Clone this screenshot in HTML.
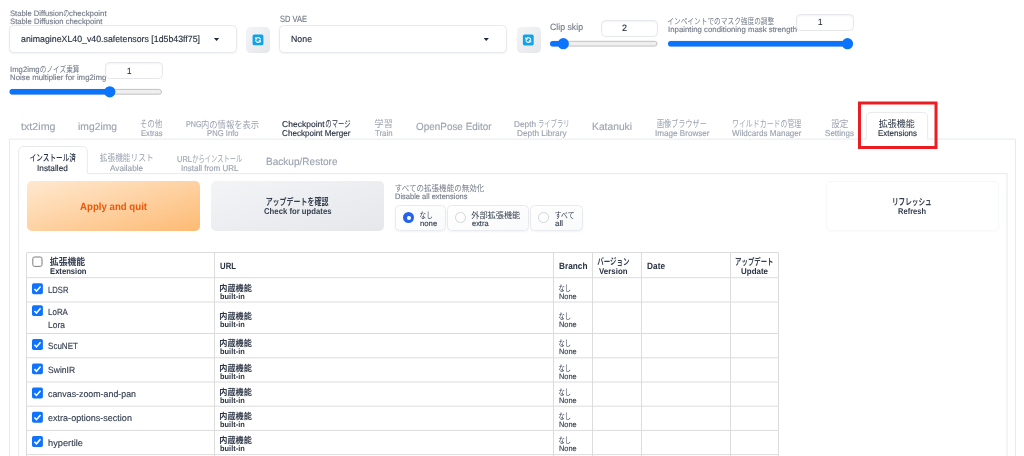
<!DOCTYPE html>
<html lang="ja"><head><meta charset="utf-8"><title>Stable Diffusion</title>
<style>
html,body{margin:0;padding:0;background:#fff}
html{width:1024px;height:456px;overflow:hidden}
body{width:1024px;height:456px;position:relative;overflow:hidden;font-family:"Liberation Sans",sans-serif}
#page{position:absolute;left:0;top:0;width:1024px;height:456px;overflow:hidden}
#soft{position:absolute;left:0;top:0;width:1024px;height:500px;filter:blur(.35px)}
.abs,.j,.t,.box,.rbtn,.num,.trk,.fill,.thumb,.panel,.seltab,.red,.apply,.gbtn,.wbtn,.rad,.rc,.tbl,.hl,.vl,.cb{position:absolute;box-sizing:border-box}
.j{overflow:visible;display:block}
.j text{font-family:"Liberation Sans","Noto Sans CJK JP",sans-serif}
.t{white-space:pre;line-height:12px;-webkit-text-stroke:.15px;transform-origin:0 0;margin:0}
.box{border:1px solid #e7e9ed;border-radius:4.5px;background:#fff;box-shadow:0 1px 2px rgba(0,0,0,.05)}
.rbtn{border-radius:4.5px;background:linear-gradient(to bottom right,#f3f4f6,#e5e7eb)}
.num{border:1px solid #e5e7eb;border-radius:4.5px;background:#fff;box-shadow:inset 0 1px 2px rgba(0,0,0,.05)}
.trk{height:6px;border-radius:3px;background:#efefef;border:1px solid #b9b9b9}
.fill{height:6px;border-radius:3px;background:#0a74ff}
.thumb{width:11px;height:11px;border-radius:50%;background:#0a74ff}
.panel{border:1px solid #e5e7eb;background:#fff}
.seltab{border:1px solid #e5e7eb;border-bottom:1px solid #fff;border-radius:5px 5px 0 0;background:#fff}
.red{border:3px solid #ec1c24}
.apply{border-radius:5px;background:linear-gradient(to bottom right,#ffe9d0,#fdba74)}
.gbtn{border-radius:5px;background:linear-gradient(to bottom right,#f3f4f6,#e5e7eb)}
.wbtn{border-radius:5px;background:#fff;border:1px solid #f7f8f9;box-shadow:0 1px 2px rgba(0,0,0,.025)}
.rad{border:1px solid #e8eaee;border-radius:4.5px;background:linear-gradient(to bottom right,#fff,#f9fafb);box-shadow:0 1px 2px rgba(0,0,0,.05)}
.rc{width:11px;height:11px;border-radius:50%;border:1px solid #d1d5db;background:#fff}
.rc.on{border:none;background:#2563eb}
.rc.on:after{content:"";position:absolute;left:3.6px;top:3.6px;width:3.8px;height:3.8px;border-radius:50%;background:#fff}
.tbl{border:1px solid #dedede;background:#fff}
.hl{height:1px;background:#dedede}
.vl{width:1px;background:#dedede}
.cb{width:11px;height:11px;border:1px solid #9ca3af;border-radius:2px;background:#fff}
</style></head>
<body>
<div id="page"><div id="soft">
<div class="box" style="left:9px;top:25px;width:228px;height:28px"></div>
<span class="t" style="left:9.60px;top:8px;font-size:7.8px;color:#747b88;transform:skewX(.2deg) scaleX(0.9767)">Stable Diffusion</span>
<svg class="j" role="img" aria-label="の" style="left:62px;top:8px;fill:#747b88" width="8" height="12"><text x="1.23" y="8.39" font-size="8.4" textLength="6.0" lengthAdjust="spacingAndGlyphs">の</text></svg>
<span class="t" style="left:69.40px;top:8px;font-size:7.8px;color:#747b88;transform:skewX(.2deg) scaleX(1.0085)">checkpoint</span>
<span class="t" style="left:9.60px;top:16px;font-size:7.8px;color:#747b88;transform:skewX(.2deg) scaleX(0.9838)">Stable Diffusion checkpoint</span>
<span class="t" style="left:20.50px;top:33px;font-size:9.1px;color:#283241;transform:skewX(.2deg) scaleX(0.9655)">animagineXL40_v40.safetensors [1d5b43ff75]</span>
<svg class="abs" style="left:212px;top:37px" width="9" height="5"><g transform="translate(1.90 1.00) scale(0.5300 0.5000)"><path d="M0 0h10L5 6z" fill="#1f2937"/></g></svg>
<div class="rbtn" style="left:246px;top:27px;width:24px;height:26px"></div>
<svg class="abs" style="left:251px;top:33px" width="14" height="14"><g transform="translate(1.60 1.50) scale(0.4909 0.4909)"><rect width="22" height="22" rx="3.2" fill="#12a2e8"/><g transform="translate(22 0) scale(-1 1)" fill="#fff"><path d="M4.9 10.4a6.1 6.1 0 0 1 10.3-3.7l1.7-1.7v5.4h-5.4l1.9-1.9a3.5 3.5 0 0 0-6 1.9z"/><path d="M17.1 11.6a6.1 6.1 0 0 1-10.3 3.7l-1.7 1.7v-5.4h5.4l-1.9 1.9a3.5 3.5 0 0 0 6-1.9z"/></g></g></svg>
<span class="t" style="left:280.00px;top:13px;font-size:9.1px;color:#747b88;transform:skewX(.2deg) scaleX(0.8260)">SD VAE</span>
<div class="box" style="left:279px;top:25px;width:228px;height:28px"></div>
<span class="t" style="left:291.00px;top:33px;font-size:9.1px;color:#283241;transform:skewX(.2deg) scaleX(0.9655)">None</span>
<svg class="abs" style="left:482px;top:37px" width="8" height="5"><g transform="translate(1.60 1.00) scale(0.5300 0.5000)"><path d="M0 0h10L5 6z" fill="#1f2937"/></g></svg>
<div class="rbtn" style="left:516.5px;top:27px;width:24px;height:26px"></div>
<svg class="abs" style="left:521px;top:33px" width="14" height="14"><g transform="translate(1.90 1.60) scale(0.4909 0.4909)"><rect width="22" height="22" rx="3.2" fill="#12a2e8"/><g transform="translate(22 0) scale(-1 1)" fill="#fff"><path d="M4.9 10.4a6.1 6.1 0 0 1 10.3-3.7l1.7-1.7v5.4h-5.4l1.9-1.9a3.5 3.5 0 0 0-6 1.9z"/><path d="M17.1 11.6a6.1 6.1 0 0 1-10.3 3.7l-1.7 1.7v-5.4h5.4l-1.9 1.9a3.5 3.5 0 0 0 6-1.9z"/></g></g></svg>
<span class="t" style="left:550.00px;top:21px;font-size:9.1px;color:#747b88;transform:skewX(.2deg) scaleX(0.9600)">Clip skip</span>
<div class="num" style="left:601px;top:20px;width:57px;height:17px"></div>
<span class="t" style="left:621.80px;top:22px;font-size:9.1px;color:#283241;transform:skewX(.2deg) scaleX(0.9877)">2</span>
<svg class="abs" style="left:548px;top:36px" width="118" height="15"><rect x="2.50" y="5.30" width="106.50" height="4.8" rx="2.4" fill="#efefef" stroke="#b4b4b4" stroke-width="0.8"/><rect x="2.00" y="4.90" width="13.30" height="5.6" rx="2.8" fill="#0a74ff"/><circle cx="15.30" cy="7.70" r="5.6" fill="#0a74ff"/></svg>
<svg class="j" role="img" aria-label="インペイントでのマスク強度の調整" style="left:666px;top:15px;fill:#747b88" width="109" height="13"><text x="1.34" y="9.19" font-size="8.4" textLength="106.9" lengthAdjust="spacingAndGlyphs">インペイントでのマスク強度の調整</text></svg>
<span class="t" style="left:667.50px;top:24px;font-size:7.8px;color:#747b88;transform:skewX(.2deg) scaleX(1.0021)">Inpainting conditioning mask strength</span>
<div class="num" style="left:796px;top:14px;width:58px;height:17px"></div>
<span class="t" style="left:818.00px;top:16px;font-size:9.1px;color:#283241;transform:skewX(.2deg) scaleX(0.8889)">1</span>
<svg class="abs" style="left:666px;top:36px" width="195" height="15"><rect x="2.50" y="5.30" width="184.00" height="4.8" rx="2.4" fill="#efefef" stroke="#b4b4b4" stroke-width="0.8"/><rect x="2.00" y="4.90" width="179.50" height="5.6" rx="2.8" fill="#0a74ff"/><circle cx="181.50" cy="7.70" r="5.6" fill="#0a74ff"/></svg>
<span class="t" style="left:9.60px;top:64px;font-size:7.8px;color:#747b88;transform:skewX(.2deg) scaleX(0.9898)">Img2img</span>
<svg class="j" role="img" aria-label="のノイズ乗算" style="left:38px;top:64px;fill:#747b88" width="43" height="12"><text x="1.73" y="8.39" font-size="8.4" textLength="39.8" lengthAdjust="spacingAndGlyphs">のノイズ乗算</text></svg>
<span class="t" style="left:9.60px;top:72px;font-size:7.8px;color:#747b88;transform:skewX(.2deg) scaleX(1.0020)">Noise multiplier for img2img</span>
<div class="num" style="left:105px;top:62px;width:58px;height:17px"></div>
<span class="t" style="left:127.00px;top:65px;font-size:9.1px;color:#283241;transform:skewX(.2deg) scaleX(0.8889)">1</span>
<svg class="abs" style="left:7px;top:84px" width="163" height="15"><rect x="3.00" y="5.40" width="151.50" height="4.8" rx="2.4" fill="#efefef" stroke="#b4b4b4" stroke-width="0.8"/><rect x="2.50" y="5.00" width="100.30" height="5.6" rx="2.8" fill="#0a74ff"/><circle cx="102.80" cy="7.80" r="5.6" fill="#0a74ff"/></svg>
<svg class="abs" style="left:0;top:0" width="1024" height="500"><path d="M9.5 500V139.1H866.3V116.9a4.5 4.5 0 0 1 4.5 -4.5H923.1a4.5 4.5 0 0 1 4.5 4.5V139.1H1015.5V500 M18.6 500V151.0a4.5 4.5 0 0 1 4.5 -4.5H82.8a4.5 4.5 0 0 1 4.5 4.5V173.6H1007V500" fill="none" stroke="#e7e9ed" stroke-width="1"/><path d="M26.5 252.5H778.5 M26.5 277.7H778.5 M26.5 302H778.5 M26.5 333.5H778.5 M26.5 357.8H778.5 M26.5 382H778.5 M26.5 406.2H778.5 M26.5 430.4H778.5 M26.5 454.6H778.5 M26.5 478.8H778.5 M26.5 252.5V500 M214.5 252.5V500 M553.5 252.5V500 M592.5 252.5V500 M641.5 252.5V500 M730.5 252.5V500 M778.5 252.5V500" fill="none" stroke="#dcdcdc" stroke-width="1"/></svg>
<span class="t" style="left:20.50px;top:121px;font-size:10.4px;color:#9ca3af;transform:skewX(.2deg) scaleX(1.0299)">txt2img</span>
<span class="t" style="left:78.00px;top:121px;font-size:10.4px;color:#9ca3af;transform:skewX(.2deg) scaleX(0.9932)">img2img</span>
<svg class="j" role="img" aria-label="その他" style="left:139px;top:118px;fill:#9ca3af" width="24" height="13"><text x="0.70" y="9.36" font-size="9.1" textLength="22.7" lengthAdjust="spacingAndGlyphs">その他</text></svg>
<span class="t" style="left:140.50px;top:127px;font-size:8.45px;color:#9ca3af;transform:skewX(.2deg) scaleX(0.8988)">Extras</span>
<span class="t" style="left:185.60px;top:118px;font-size:8.45px;color:#9ca3af;transform:skewX(.2deg) scaleX(0.8417)">PNG</span>
<svg class="j" role="img" aria-label="内の情報を表示" style="left:200px;top:118px;fill:#9ca3af" width="60" height="13"><text x="1.00" y="9.66" font-size="9.1" textLength="58.1" lengthAdjust="spacingAndGlyphs">内の情報を表示</text></svg>
<span class="t" style="left:206.50px;top:127px;font-size:8.45px;color:#9ca3af;transform:skewX(.2deg) scaleX(0.9077)">PNG Info</span>
<span class="t" style="left:282.20px;top:118px;font-size:8.45px;color:#283241;transform:skewX(.2deg) scaleX(1.0090)">Checkpoint</span>
<svg class="j" role="img" aria-label="のマージ" style="left:324px;top:118px;fill:#283241" width="28" height="13"><text x="1.32" y="9.36" font-size="9.1" textLength="25.3" lengthAdjust="spacingAndGlyphs">のマージ</text></svg>
<span class="t" style="left:282.20px;top:127px;font-size:8.45px;color:#283241;transform:skewX(.2deg) scaleX(0.9608)">Checkpoint Merger</span>
<svg class="j" role="img" aria-label="学習" style="left:374px;top:118px;fill:#9ca3af" width="19" height="13"><text x="0.45" y="9.36" font-size="9.1" textLength="18.4" lengthAdjust="spacingAndGlyphs">学習</text></svg>
<span class="t" style="left:374.50px;top:127px;font-size:8.45px;color:#9ca3af;transform:skewX(.2deg) scaleX(0.9249)">Train</span>
<span class="t" style="left:415.50px;top:121px;font-size:10.4px;color:#9ca3af;transform:skewX(.2deg) scaleX(0.9540)">OpenPose Editor</span>
<span class="t" style="left:514.00px;top:118px;font-size:8.45px;color:#9ca3af;transform:skewX(.2deg) scaleX(0.9771)">Depth</span>
<svg class="j" role="img" aria-label="ライブラリ" style="left:537px;top:118px;fill:#9ca3af" width="33" height="13"><text x="0.93" y="9.36" font-size="9.1" textLength="31.7" lengthAdjust="spacingAndGlyphs">ライブラリ</text></svg>
<span class="t" style="left:516.50px;top:127px;font-size:8.45px;color:#9ca3af;transform:skewX(.2deg) scaleX(0.9772)">Depth Library</span>
<span class="t" style="left:592.00px;top:121px;font-size:10.4px;color:#9ca3af;transform:skewX(.2deg) scaleX(0.9892)">Katanuki</span>
<svg class="j" role="img" aria-label="画像ブラウザー" style="left:656px;top:118px;fill:#9ca3af" width="52" height="13"><text x="0.98" y="9.36" font-size="9.1" textLength="49.8" lengthAdjust="spacingAndGlyphs">画像ブラウザー</text></svg>
<span class="t" style="left:654.50px;top:127px;font-size:8.45px;color:#9ca3af;transform:skewX(.2deg) scaleX(0.9604)">Image Browser</span>
<svg class="j" role="img" aria-label="ワイルドカードの管理" style="left:731px;top:118px;fill:#9ca3af" width="71" height="13"><text x="0.99" y="9.36" font-size="9.1" textLength="69.3" lengthAdjust="spacingAndGlyphs">ワイルドカードの管理</text></svg>
<span class="t" style="left:732.00px;top:127px;font-size:8.45px;color:#9ca3af;transform:skewX(.2deg) scaleX(0.9561)">Wildcards Manager</span>
<svg class="j" role="img" aria-label="設定" style="left:830px;top:118px;fill:#9ca3af" width="19" height="13"><text x="1.17" y="9.36" font-size="9.1" textLength="17.2" lengthAdjust="spacingAndGlyphs">設定</text></svg>
<span class="t" style="left:825.00px;top:127px;font-size:8.45px;color:#9ca3af;transform:skewX(.2deg) scaleX(0.9508)">Settings</span>
<svg class="j" role="img" aria-label="拡張機能" style="left:878px;top:118px;fill:#283241" width="38" height="13"><text x="0.76" y="9.36" font-size="9.1" textLength="36.0" lengthAdjust="spacingAndGlyphs">拡張機能</text></svg>
<span class="t" style="left:877.50px;top:127px;font-size:8.45px;color:#283241;transform:skewX(.2deg) scaleX(0.9447)">Extensions</span>
<svg class="abs" style="left:855px;top:98px" width="86" height="54"><rect x="4.5" y="5" width="76.5" height="44.5" fill="none" stroke="#ec1c24" stroke-width="3"/></svg>
<svg class="j" role="img" aria-label="インストール済" style="left:28px;top:152px;fill:#283241" width="49" height="13"><text x="1.70" y="9.46" font-size="9.1" font-weight="500" textLength="46.2" lengthAdjust="spacingAndGlyphs">インストール済</text></svg>
<span class="t" style="left:37.40px;top:162px;font-size:8.45px;color:#283241;transform:skewX(.2deg) scaleX(0.9797)">Installed</span>
<svg class="j" role="img" aria-label="拡張機能リスト" style="left:99px;top:152px;fill:#9ca3af" width="55" height="13"><text x="0.76" y="9.46" font-size="9.1" textLength="53.9" lengthAdjust="spacingAndGlyphs">拡張機能リスト</text></svg>
<span class="t" style="left:110.00px;top:162px;font-size:8.45px;color:#9ca3af;transform:skewX(.2deg) scaleX(0.9679)">Available</span>
<span class="t" style="left:176.50px;top:153px;font-size:8.45px;color:#9ca3af;transform:skewX(.2deg) scaleX(0.8881)">URL</span>
<svg class="j" role="img" aria-label="からインストール" style="left:191px;top:152px;fill:#9ca3af" width="53" height="13"><text x="1.19" y="9.66" font-size="9.1" textLength="50.1" lengthAdjust="spacingAndGlyphs">からインストール</text></svg>
<span class="t" style="left:180.50px;top:162px;font-size:8.45px;color:#9ca3af;transform:skewX(.2deg) scaleX(0.9507)">Install from URL</span>
<span class="t" style="left:266.00px;top:156px;font-size:10.4px;color:#9ca3af;transform:skewX(.2deg) scaleX(0.9670)">Backup/Restore</span>
<div class="apply" style="left:26.5px;top:180.5px;width:173.5px;height:50.5px"></div>
<span class="t" style="left:79.50px;top:201px;font-size:10.4px;color:#ea580c;font-weight:700;-webkit-text-stroke:0;transform:skewX(.2deg) scaleX(0.9285)">Apply and quit</span>
<div class="gbtn" style="left:210.5px;top:180.5px;width:173.5px;height:50.5px"></div>
<svg class="j" role="img" aria-label="アップデートを確認" style="left:265px;top:195px;fill:#364050" width="65" height="13"><text x="0.63" y="9.76" font-size="9.1" font-weight="700" textLength="63.0" lengthAdjust="spacingAndGlyphs">アップデートを確認</text></svg>
<span class="t" style="left:263.50px;top:205px;font-size:8.45px;color:#364050;font-weight:700;-webkit-text-stroke:0;transform:skewX(.2deg) scaleX(0.9168)">Check for updates</span>
<svg class="j" role="img" aria-label="すべての拡張機能の無効化" style="left:394px;top:182px;fill:#747b88" width="91" height="12"><text x="0.77" y="8.89" font-size="8.4" textLength="89.5" lengthAdjust="spacingAndGlyphs">すべての拡張機能の無効化</text></svg>
<span class="t" style="left:395.00px;top:191px;font-size:7.8px;color:#747b88;transform:skewX(.2deg) scaleX(0.9613)">Disable all extensions</span>
<div class="rad" style="left:395px;top:205px;width:50.5px;height:26px"></div><div class="rc on" style="left:403.2px;top:212.3px"></div>
<svg class="j" role="img" aria-label="なし" style="left:418px;top:209px;fill:#374151" width="16" height="12"><text x="1.56" y="8.59" font-size="8.4" textLength="13.2" lengthAdjust="spacingAndGlyphs">なし</text></svg>
<span class="t" style="left:419.80px;top:218px;font-size:7.8px;color:#374151;transform:skewX(.2deg) scaleX(0.9908)">none</span>
<div class="rad" style="left:447px;top:205px;width:82px;height:26px"></div><div class="rc" style="left:455.1px;top:212.3px"></div>
<svg class="j" role="img" aria-label="外部拡張機能" style="left:470px;top:209px;fill:#374151" width="51" height="12"><text x="1.29" y="8.59" font-size="8.4" textLength="49.0" lengthAdjust="spacingAndGlyphs">外部拡張機能</text></svg>
<span class="t" style="left:471.50px;top:218px;font-size:7.8px;color:#374151;transform:skewX(.2deg) scaleX(0.9514)">extra</span>
<div class="rad" style="left:530px;top:205px;width:52.5px;height:26px"></div><div class="rc" style="left:538.0px;top:212.3px"></div>
<svg class="j" role="img" aria-label="すべて" style="left:554px;top:209px;fill:#374151" width="21" height="12"><text x="0.75" y="8.59" font-size="8.4" textLength="19.7" lengthAdjust="spacingAndGlyphs">すべて</text></svg>
<span class="t" style="left:555.00px;top:218px;font-size:7.8px;color:#374151;transform:skewX(.2deg) scaleX(1.0240)">all</span>
<div class="wbtn" style="left:825.5px;top:180.5px;width:173px;height:50.5px"></div>
<svg class="j" role="img" aria-label="リフレッシュ" style="left:892px;top:195px;fill:#364050" width="40" height="13"><text x="0" y="9.76" font-size="9.1" font-weight="700" textLength="39.6" lengthAdjust="spacingAndGlyphs">リフレッシュ</text></svg>
<span class="t" style="left:898.00px;top:205px;font-size:8.45px;color:#364050;font-weight:700;-webkit-text-stroke:0;transform:skewX(.2deg) scaleX(0.8911)">Refresh</span>
<svg class="abs" style="left:31px;top:255px" width="13" height="13"><g transform="translate(1.30 1.50) scale(1.0000 1.0000)"><rect x="0.5" y="0.5" width="9.2" height="9.4" rx="1.8" fill="#fff" stroke="#7c7c7c" stroke-width="1"/></g></svg>
<svg class="j" role="img" aria-label="拡張機能" style="left:49px;top:256px;fill:#364050" width="37" height="13"><text x="0.81" y="9.46" font-size="9.1" font-weight="700" textLength="35.4" lengthAdjust="spacingAndGlyphs">拡張機能</text></svg>
<span class="t" style="left:49.50px;top:265px;font-size:8.45px;color:#283241;font-weight:700;-webkit-text-stroke:0;transform:skewX(.2deg) scaleX(0.9051)">Extension</span>
<span class="t" style="left:220.00px;top:260px;font-size:9.1px;color:#283241;font-weight:700;-webkit-text-stroke:0;transform:skewX(.2deg) scaleX(0.8555)">URL</span>
<span class="t" style="left:558.50px;top:260px;font-size:9.1px;color:#283241;font-weight:700;-webkit-text-stroke:0;transform:skewX(.2deg) scaleX(0.9093)">Branch</span>
<svg class="j" role="img" aria-label="バージョン" style="left:596px;top:256px;fill:#364050" width="35" height="13"><text x="1.20" y="9.26" font-size="9.1" font-weight="700" textLength="32.3" lengthAdjust="spacingAndGlyphs">バージョン</text></svg>
<span class="t" style="left:599.00px;top:265px;font-size:8.45px;color:#283241;font-weight:700;-webkit-text-stroke:0;transform:skewX(.2deg) scaleX(0.9349)">Version</span>
<span class="t" style="left:647.00px;top:260px;font-size:9.1px;color:#283241;font-weight:700;-webkit-text-stroke:0;transform:skewX(.2deg) scaleX(0.9128)">Date</span>
<svg class="j" role="img" aria-label="アップデート" style="left:734px;top:256px;fill:#364050" width="40" height="13"><text x="1.12" y="9.26" font-size="9.1" font-weight="700" textLength="38.4" lengthAdjust="spacingAndGlyphs">アップデート</text></svg>
<span class="t" style="left:741.00px;top:265px;font-size:8.45px;color:#283241;font-weight:700;-webkit-text-stroke:0;transform:skewX(.2deg) scaleX(0.9437)">Update</span>
<svg class="abs" style="left:31px;top:282px" width="13" height="14"><g transform="translate(1.00 1.30) scale(0.6813 0.6813)"><rect width="16" height="16" rx="2.6" fill="#0f73fd"/><path d="M3.6 8.4l3 3.1 5.9-6.9" fill="none" stroke="#fff" stroke-width="2.3" stroke-linecap="butt" stroke-linejoin="miter"/></g></svg>
<span class="t" style="left:47.60px;top:284px;font-size:9.1px;color:#374151;transform:skewX(.2deg) scaleX(0.8407)">LDSR</span>
<svg class="j" role="img" aria-label="内蔵機能" style="left:219px;top:282px;fill:#2e3746" width="34" height="12"><text x="0.28" y="8.68" font-size="7.7" font-weight="700" textLength="32.6" lengthAdjust="spacingAndGlyphs">内蔵機能</text></svg>
<span class="t" style="left:220.00px;top:291px;font-size:7.8px;color:#283241;font-weight:700;-webkit-text-stroke:0;transform:skewX(.2deg) scaleX(0.9544)">built-in</span>
<svg class="j" role="img" aria-label="なし" style="left:557px;top:282px;fill:#374151" width="15" height="12"><text x="1.58" y="8.61" font-size="7.8" textLength="12.5" lengthAdjust="spacingAndGlyphs">なし</text></svg>
<span class="t" style="left:558.80px;top:291px;font-size:7.8px;color:#374151;transform:skewX(.2deg) scaleX(0.9495)">None</span>
<svg class="abs" style="left:31px;top:304px" width="13" height="14"><g transform="translate(1.00 1.20) scale(0.6813 0.6813)"><rect width="16" height="16" rx="2.6" fill="#0f73fd"/><path d="M3.6 8.4l3 3.1 5.9-6.9" fill="none" stroke="#fff" stroke-width="2.3" stroke-linecap="butt" stroke-linejoin="miter"/></g></svg>
<span class="t" style="left:47.60px;top:306px;font-size:9.1px;color:#374151;transform:skewX(.2deg) scaleX(0.8747)">LoRA</span>
<span class="t" style="left:47.60px;top:319px;font-size:9.1px;color:#374151;transform:skewX(.2deg) scaleX(0.9284)">Lora</span>
<svg class="j" role="img" aria-label="内蔵機能" style="left:219px;top:310px;fill:#2e3746" width="34" height="12"><text x="0.28" y="8.58" font-size="7.7" font-weight="700" textLength="32.6" lengthAdjust="spacingAndGlyphs">内蔵機能</text></svg>
<span class="t" style="left:220.00px;top:319px;font-size:7.8px;color:#283241;font-weight:700;-webkit-text-stroke:0;transform:skewX(.2deg) scaleX(0.9544)">built-in</span>
<svg class="j" role="img" aria-label="なし" style="left:557px;top:310px;fill:#374151" width="15" height="12"><text x="1.58" y="8.51" font-size="7.8" textLength="12.5" lengthAdjust="spacingAndGlyphs">なし</text></svg>
<span class="t" style="left:558.80px;top:319px;font-size:7.8px;color:#374151;transform:skewX(.2deg) scaleX(0.9495)">None</span>
<svg class="abs" style="left:31px;top:338px" width="13" height="13"><g transform="translate(1.00 1.10) scale(0.6813 0.6813)"><rect width="16" height="16" rx="2.6" fill="#0f73fd"/><path d="M3.6 8.4l3 3.1 5.9-6.9" fill="none" stroke="#fff" stroke-width="2.3" stroke-linecap="butt" stroke-linejoin="miter"/></g></svg>
<span class="t" style="left:47.60px;top:340px;font-size:9.1px;color:#374151;transform:skewX(.2deg) scaleX(0.8831)">ScuNET</span>
<svg class="j" role="img" aria-label="内蔵機能" style="left:219px;top:338px;fill:#2e3746" width="34" height="12"><text x="0.28" y="8.48" font-size="7.7" font-weight="700" textLength="32.6" lengthAdjust="spacingAndGlyphs">内蔵機能</text></svg>
<span class="t" style="left:220.00px;top:346px;font-size:7.8px;color:#283241;font-weight:700;-webkit-text-stroke:0;transform:skewX(.2deg) scaleX(0.9544)">built-in</span>
<svg class="j" role="img" aria-label="なし" style="left:557px;top:338px;fill:#374151" width="15" height="12"><text x="1.58" y="8.41" font-size="7.8" textLength="12.5" lengthAdjust="spacingAndGlyphs">なし</text></svg>
<span class="t" style="left:558.80px;top:346px;font-size:7.8px;color:#374151;transform:skewX(.2deg) scaleX(0.9495)">None</span>
<svg class="abs" style="left:31px;top:362px" width="13" height="14"><g transform="translate(1.00 1.40) scale(0.6813 0.6813)"><rect width="16" height="16" rx="2.6" fill="#0f73fd"/><path d="M3.6 8.4l3 3.1 5.9-6.9" fill="none" stroke="#fff" stroke-width="2.3" stroke-linecap="butt" stroke-linejoin="miter"/></g></svg>
<span class="t" style="left:47.60px;top:364px;font-size:9.1px;color:#374151;transform:skewX(.2deg) scaleX(0.9406)">SwinIR</span>
<svg class="j" role="img" aria-label="内蔵機能" style="left:219px;top:362px;fill:#2e3746" width="34" height="12"><text x="0.28" y="8.73" font-size="7.7" font-weight="700" textLength="32.6" lengthAdjust="spacingAndGlyphs">内蔵機能</text></svg>
<span class="t" style="left:220.00px;top:371px;font-size:7.8px;color:#283241;font-weight:700;-webkit-text-stroke:0;transform:skewX(.2deg) scaleX(0.9544)">built-in</span>
<svg class="j" role="img" aria-label="なし" style="left:557px;top:362px;fill:#374151" width="15" height="12"><text x="1.58" y="8.66" font-size="7.8" textLength="12.5" lengthAdjust="spacingAndGlyphs">なし</text></svg>
<span class="t" style="left:558.80px;top:371px;font-size:7.8px;color:#374151;transform:skewX(.2deg) scaleX(0.9495)">None</span>
<svg class="abs" style="left:31px;top:386px" width="13" height="14"><g transform="translate(1.00 1.60) scale(0.6813 0.6813)"><rect width="16" height="16" rx="2.6" fill="#0f73fd"/><path d="M3.6 8.4l3 3.1 5.9-6.9" fill="none" stroke="#fff" stroke-width="2.3" stroke-linecap="butt" stroke-linejoin="miter"/></g></svg>
<span class="t" style="left:47.60px;top:388px;font-size:9.1px;color:#374151;transform:skewX(.2deg) scaleX(0.9725)">canvas-zoom-and-pan</span>
<svg class="j" role="img" aria-label="内蔵機能" style="left:219px;top:387px;fill:#2e3746" width="34" height="11"><text x="0.28" y="7.93" font-size="7.7" font-weight="700" textLength="32.6" lengthAdjust="spacingAndGlyphs">内蔵機能</text></svg>
<span class="t" style="left:220.00px;top:395px;font-size:7.8px;color:#283241;font-weight:700;-webkit-text-stroke:0;transform:skewX(.2deg) scaleX(0.9544)">built-in</span>
<svg class="j" role="img" aria-label="なし" style="left:557px;top:387px;fill:#374151" width="15" height="11"><text x="1.58" y="7.86" font-size="7.8" textLength="12.5" lengthAdjust="spacingAndGlyphs">なし</text></svg>
<span class="t" style="left:558.80px;top:395px;font-size:7.8px;color:#374151;transform:skewX(.2deg) scaleX(0.9495)">None</span>
<svg class="abs" style="left:31px;top:410px" width="13" height="14"><g transform="translate(1.00 1.80) scale(0.6813 0.6813)"><rect width="16" height="16" rx="2.6" fill="#0f73fd"/><path d="M3.6 8.4l3 3.1 5.9-6.9" fill="none" stroke="#fff" stroke-width="2.3" stroke-linecap="butt" stroke-linejoin="miter"/></g></svg>
<span class="t" style="left:47.60px;top:412px;font-size:9.1px;color:#374151;transform:skewX(.2deg) scaleX(0.9938)">extra-options-section</span>
<svg class="j" role="img" aria-label="内蔵機能" style="left:219px;top:411px;fill:#2e3746" width="34" height="12"><text x="0.28" y="8.13" font-size="7.7" font-weight="700" textLength="32.6" lengthAdjust="spacingAndGlyphs">内蔵機能</text></svg>
<span class="t" style="left:220.00px;top:419px;font-size:7.8px;color:#283241;font-weight:700;-webkit-text-stroke:0;transform:skewX(.2deg) scaleX(0.9544)">built-in</span>
<svg class="j" role="img" aria-label="なし" style="left:557px;top:411px;fill:#374151" width="15" height="11"><text x="1.58" y="8.06" font-size="7.8" textLength="12.5" lengthAdjust="spacingAndGlyphs">なし</text></svg>
<span class="t" style="left:558.80px;top:419px;font-size:7.8px;color:#374151;transform:skewX(.2deg) scaleX(0.9495)">None</span>
<svg class="abs" style="left:31px;top:435px" width="13" height="13"><g transform="translate(1.00 1.00) scale(0.6813 0.6813)"><rect width="16" height="16" rx="2.6" fill="#0f73fd"/><path d="M3.6 8.4l3 3.1 5.9-6.9" fill="none" stroke="#fff" stroke-width="2.3" stroke-linecap="butt" stroke-linejoin="miter"/></g></svg>
<span class="t" style="left:47.60px;top:437px;font-size:9.1px;color:#374151;transform:skewX(.2deg) scaleX(1.0153)">hypertile</span>
<svg class="j" role="img" aria-label="内蔵機能" style="left:219px;top:435px;fill:#2e3746" width="34" height="12"><text x="0.28" y="8.33" font-size="7.7" font-weight="700" textLength="32.6" lengthAdjust="spacingAndGlyphs">内蔵機能</text></svg>
<span class="t" style="left:220.00px;top:443px;font-size:7.8px;color:#283241;font-weight:700;-webkit-text-stroke:0;transform:skewX(.2deg) scaleX(0.9544)">built-in</span>
<svg class="j" role="img" aria-label="なし" style="left:557px;top:435px;fill:#374151" width="15" height="12"><text x="1.58" y="8.26" font-size="7.8" textLength="12.5" lengthAdjust="spacingAndGlyphs">なし</text></svg>
<span class="t" style="left:558.80px;top:443px;font-size:7.8px;color:#374151;transform:skewX(.2deg) scaleX(0.9495)">None</span>
</div></div>
</body></html>
